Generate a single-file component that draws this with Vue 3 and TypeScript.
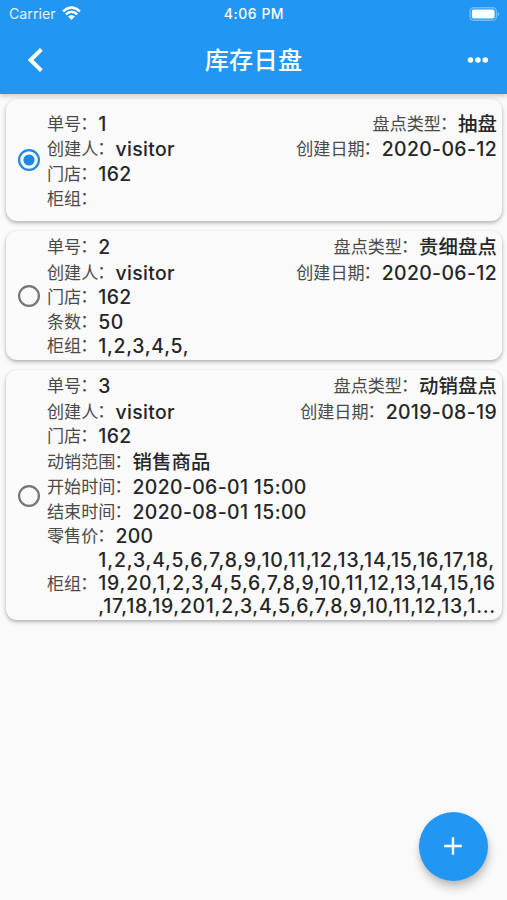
<script setup lang="ts">
interface Field {
  label: string
  value: string
  tall?: boolean
  right?: { label: string; value: string }
  lines?: string[]
}
interface Sheet {
  id: number
  selected: boolean
  fields: Field[]
}

const sheets: Sheet[] = [
  {
    id: 1,
    selected: true,
    fields: [
      { label: '单号', value: '1', tall: true, right: { label: '盘点类型', value: '抽盘' } },
      { label: '创建人', value: 'visitor', right: { label: '创建日期', value: '2020-06-12' } },
      { label: '门店', value: '162' },
      { label: '柜组', value: '' },
    ],
  },
  {
    id: 2,
    selected: false,
    fields: [
      { label: '单号', value: '2', tall: true, right: { label: '盘点类型', value: '贵细盘点' } },
      { label: '创建人', value: 'visitor', right: { label: '创建日期', value: '2020-06-12' } },
      { label: '门店', value: '162' },
      { label: '条数', value: '50' },
      { label: '柜组', value: '1,2,3,4,5,' },
    ],
  },
  {
    id: 3,
    selected: false,
    fields: [
      { label: '单号', value: '3', tall: true, right: { label: '盘点类型', value: '动销盘点' } },
      { label: '创建人', value: 'visitor', right: { label: '创建日期', value: '2019-08-19' } },
      { label: '门店', value: '162' },
      { label: '动销范围', value: '销售商品', tall: true },
      { label: '开始时间', value: '2020-06-01 15:00' },
      { label: '结束时间', value: '2020-08-01 15:00' },
      { label: '零售价', value: '200' },
      {
        label: '柜组',
        value: '',
        lines: [
          '1,2,3,4,5,6,7,8,9,10,11,12,13,14,15,16,17,18,',
          '19,20,1,2,3,4,5,6,7,8,9,10,11,12,13,14,15,16',
          ',17,18,19,201,2,3,4,5,6,7,8,9,10,11,12,13,1...',
        ],
      },
    ],
  },
]

const isHan = (text: string): boolean => /[\u4e00-\u9fff]/.test(text)
</script>

<template>
  <div class="screen">
    <header class="top">
      <div class="status">
        <div class="carrier">
          <span>Carrier</span>
          <svg class="wifi" width="19" height="14" viewBox="0 0 19 14">
            <path d="M1.1 5.4Q9.5-2.6 17.9 5.4M3.9 8.4Q9.5 3 15.1 8.4" fill="none" stroke="#fff" stroke-width="2.4" />
            <path d="M6.1 10.5Q9.5 7.3 12.9 10.5L9.5 13.9Z" fill="#fff" />
          </svg>
        </div>
        <span class="time">4:06 PM</span>
        <svg class="battery" width="31" height="14" viewBox="0 0 31 14">
          <rect x="1" y=".7" width="26.4" height="12.6" rx="3.8" fill="none" stroke="#74bbf8" stroke-width="1.4" />
          <rect x="2.8" y="2.5" width="22.8" height="9" rx="2.2" fill="#fff" />
          <path d="M28.7 4.8Q30.4 5.4 30.4 7T28.7 9.2Z" fill="#74bbf8" />
        </svg>
      </div>
      <div class="bar">
        <svg class="back" width="24" height="26" viewBox="0 0 24 26">
          <path d="M17.4 2.4L6.6 13L17.4 23.6" fill="none" stroke="#fff" stroke-width="4" />
        </svg>
        <h1>库存日盘</h1>
        <svg class="more" width="22" height="8" viewBox="0 0 22 8">
          <circle cx="3.5" cy="4" r="2.8" fill="#fff" />
          <circle cx="10.9" cy="4" r="2.8" fill="#fff" />
          <circle cx="18.3" cy="4" r="2.8" fill="#fff" />
        </svg>
      </div>
    </header>

    <main class="list">
      <article v-for="s in sheets" :key="s.id" class="card">
        <svg class="radio" width="24" height="24" viewBox="0 0 24 24">
          <circle cx="12" cy="12" r="9.9" fill="none" :stroke="s.selected ? '#1e88e5' : '#757575'" stroke-width="2.2" />
          <circle v-if="s.selected" cx="12" cy="12" r="5.6" fill="#1e88e5" />
        </svg>
        <div class="fields">
          <div v-for="f in s.fields" :key="f.label" class="row" :class="{ tall: f.tall, multi: f.lines }">
            <span class="label">{{ f.label }}<span class="colon">：</span></span>
            <span v-if="f.lines" class="lines">
              <span v-for="(line, i) in f.lines" :key="i" class="value line" :class="`line-${i}`">{{ line }}</span>
            </span>
            <span v-else class="value" :class="{ commas: f.value.includes(','), han: isHan(f.value) }">{{ f.value }}</span>
            <span v-if="f.right" class="right">
              <span class="label">{{ f.right.label }}<span class="colon">：</span></span>
              <span class="value" :class="{ han: isHan(f.right.value) }">{{ f.right.value }}</span>
            </span>
          </div>
        </div>
      </article>
    </main>

    <button class="fab" aria-label="新增">
      <svg width="20" height="20" viewBox="0 0 20 20">
        <path d="M10 1.2V18.8M1.2 10H18.8" stroke="#fff" stroke-width="2.4" />
      </svg>
    </button>
  </div>
</template>

<style>
body {
  margin: 0;
  background: #fafafa;
}
</style>

<style scoped>
.screen {
  box-sizing: border-box;
  position: relative;
  height: 900px;
  overflow: hidden;
  background: #fafafa;
  color: #262626;
  font-family: Inter, "Noto Sans CJK SC", sans-serif;
}
.top {
  position: relative;
  height: 94px;
  background: #2196f3;
  color: #fff;
  box-shadow: 0 2px 5px rgba(0, 0, 0, 0.2);
}
.status {
  display: grid;
  grid-template-columns: 1fr auto 1fr;
  align-items: center;
  height: 27px;
  padding: 0 7px 0 9px;
}
.carrier {
  display: flex;
  align-items: center;
  gap: 6px;
  font-size: 14.2px;
  color: #e3f2fd;
}
.wifi {
  margin-top: -1px;
}
.time {
  margin-right: 1px;
  font-size: 14px;
  font-weight: 500;
  letter-spacing: 0.5px;
}
.battery {
  justify-self: end;
}
.bar {
  display: grid;
  grid-template-columns: 80px 1fr 80px;
  align-items: center;
  height: 66px;
}
.back {
  margin-left: 24px;
}
.bar h1 {
  margin: 0;
  padding-top: 2px;
  text-align: center;
  font-size: 24.2px;
  line-height: 36px;
  font-weight: 500;
  letter-spacing: 0.2px;
}
.more {
  justify-self: end;
  margin-right: 18px;
}
.list {
  display: flex;
  flex-direction: column;
  gap: 10.5px;
  padding: 5px 5px 0 6px;
}
.card {
  box-sizing: border-box;
  display: flex;
  align-items: center;
  min-height: 121.5px;
  padding: 2.6px 5px 1.4px 11px;
  border-radius: 11px;
  background: #fafafa;
  box-shadow: 0 2px 4px rgba(0, 0, 0, 0.26), 0 1px 3px rgba(0, 0, 0, 0.08);
}
.radio {
  flex: none;
  margin-right: 6px;
}
.fields {
  flex: 1;
  min-width: 0;
}
.row {
  box-sizing: border-box;
  display: flex;
  align-items: center;
  height: 24.6px;
  padding-top: 1.2px;
  white-space: nowrap;
}
.row.tall {
  height: 26.2px;
}
.row.multi {
  height: 70.4px;
  padding-top: 1.2px;
}
.label {
  font-size: 17.1px;
  line-height: 24px;
  font-weight: 400;
  color: #4a4a4a;
}
.colon {
  display: inline-block;
  transform: translate(-1px, -1px);
}
.value {
  font-size: 19.4px;
  line-height: 24px;
  font-weight: 450;
  letter-spacing: 0.37px;
}
.han {
  font-weight: 500;
  letter-spacing: 0.1px;
}
.commas {
  letter-spacing: 0.7px;
}
.right {
  display: flex;
  align-items: center;
  margin-left: auto;
}
.lines {
  display: flex;
  flex-direction: column;
}
.line {
  line-height: 23.4px;
}
.line-0 {
  letter-spacing: 0.84px;
}
.line-1 {
  letter-spacing: 0.79px;
}
.line-2 {
  letter-spacing: 0.7px;
}
.fab {
  position: absolute;
  left: 419px;
  top: 812px;
  display: flex;
  align-items: center;
  justify-content: center;
  width: 69px;
  height: 69px;
  padding: 0 1px 1px 0;
  border: 0;
  border-radius: 50%;
  background: #2196f3;
  box-shadow: 1px 7px 10px rgba(0, 0, 0, 0.2), 0 2px 5px rgba(0, 0, 0, 0.1);
}
</style>
